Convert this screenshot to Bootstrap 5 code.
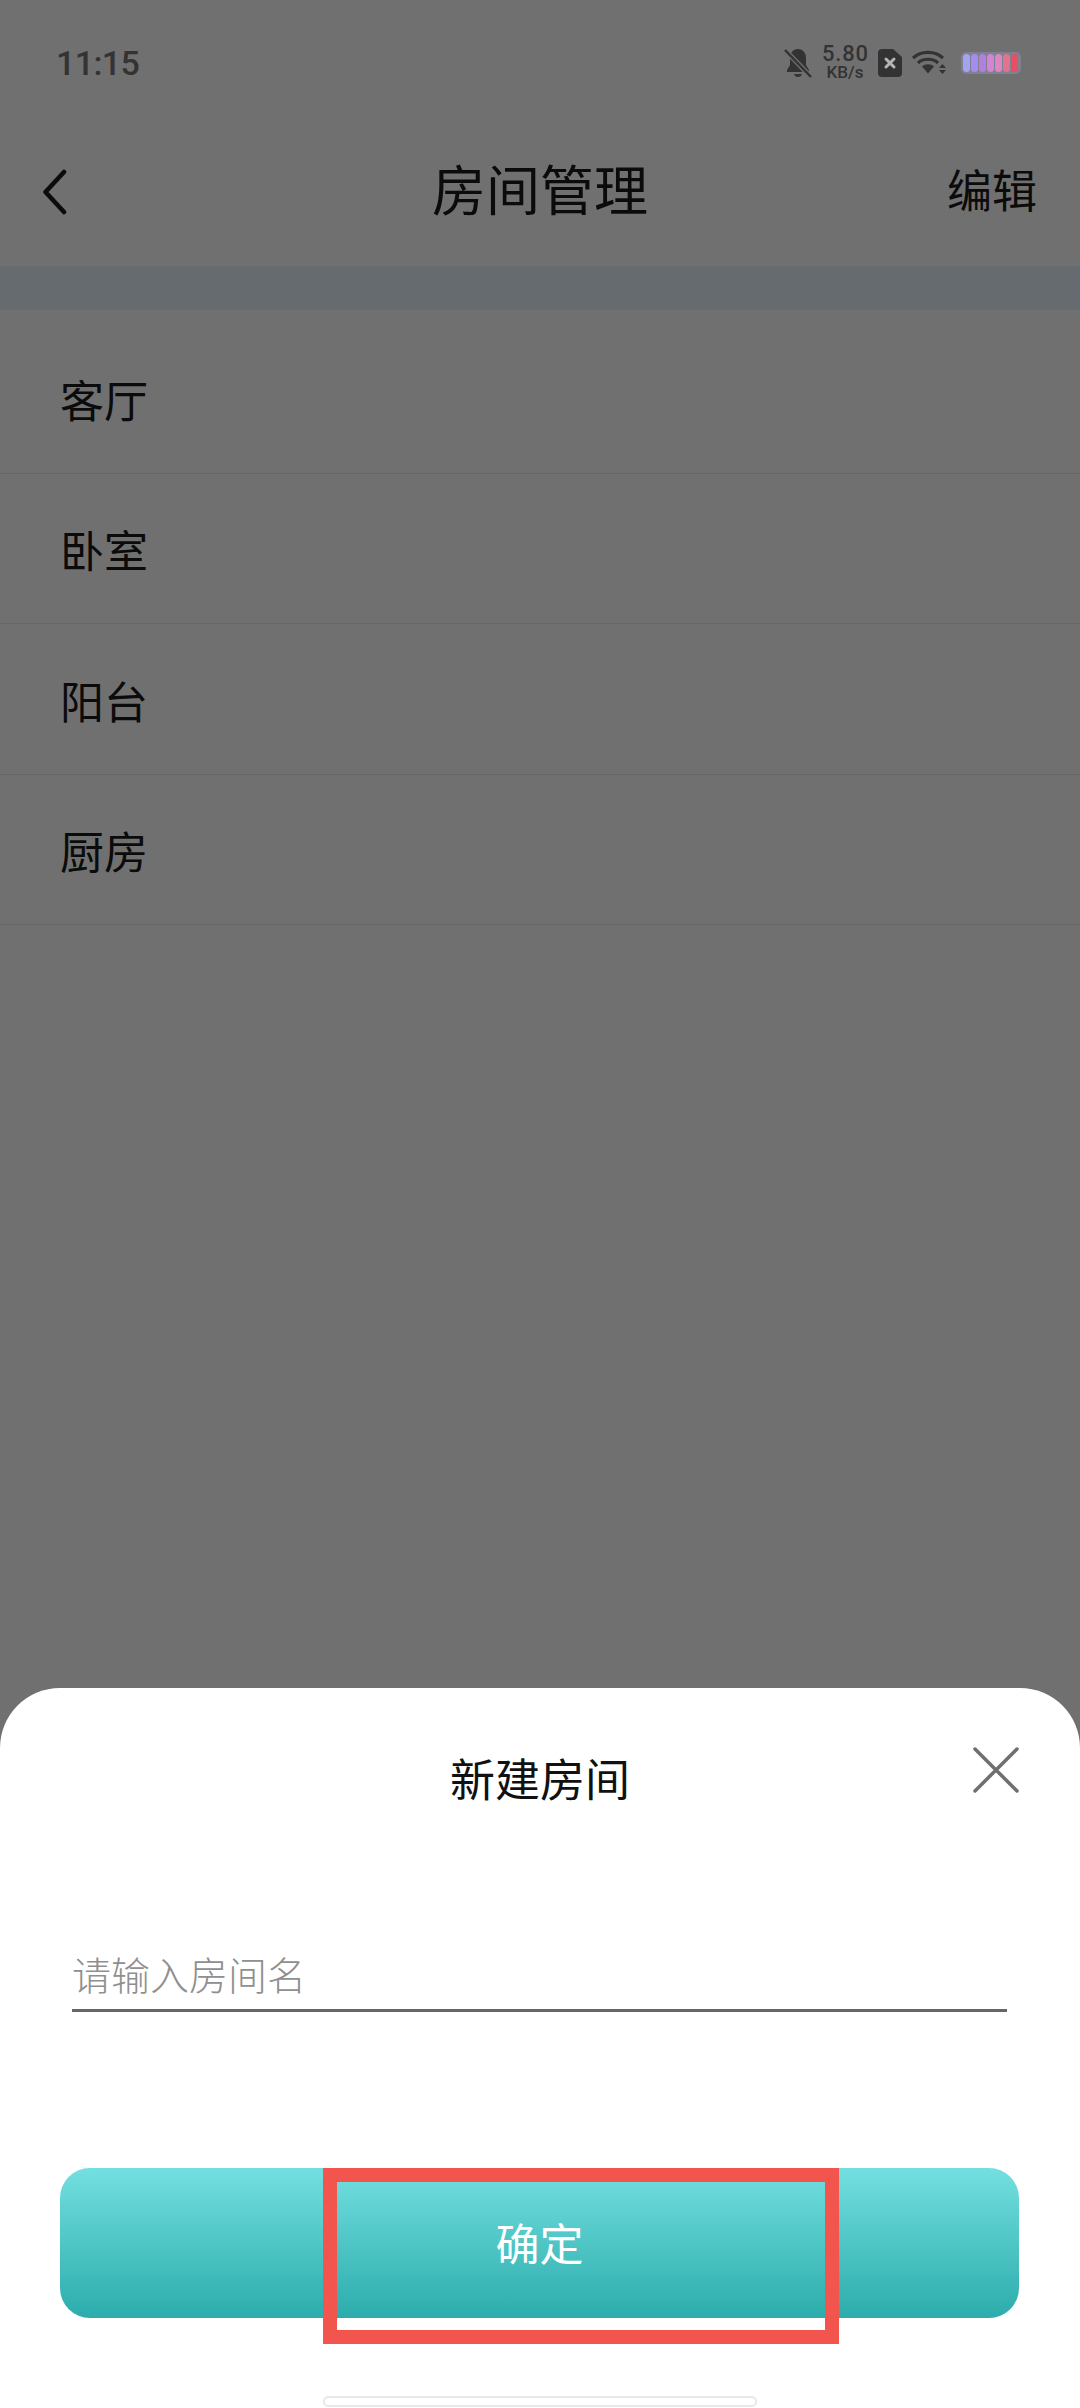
<!DOCTYPE html>
<html lang="zh-CN">
<head>
  <meta charset="UTF-8" />
  <meta name="viewport" content="width=device-width, initial-scale=1" />
  <title>房间管理</title>
  <link href="https://cdn.jsdelivr.net/npm/bootstrap@5.3.3/dist/css/bootstrap.min.css" rel="stylesheet">
  <style>
    body { margin: 0; background: #707070; font-family: "Noto Sans CJK SC", "Noto Sans", sans-serif; color: #0b0b0b; }
    .screen { width: 1080px; height: 2408px; overflow: hidden; }
    .status-row { height: 117px; padding: 0 58px 0 56px; }
    .clock { font-family: Roboto, sans-serif; font-weight: 500; font-size: 34px; letter-spacing: -.6px; line-height: 1; color: #333; margin-top: 9px; }
    .status-icons { margin-top: 8px; }
    .speed { width: 46px; margin: -2px 10px 0 10px; color: #333; font-family: Roboto, sans-serif; font-weight: 500; text-align: center; }
    .speed-top { font-size: 22px; line-height: 21px; letter-spacing: .8px; }
    .speed-unit { font-size: 17px; line-height: 17px; }
    .wifi-icon { margin-left: 9px; }
    .cell-icon { margin-left: 13px; }
    .top-nav { display: grid; grid-template-columns: 1fr auto 1fr; align-items: center; height: 149px; padding: 0 43px; }
    .top-nav-title { font-size: 54px; line-height: 1; margin-top: -8px; }
    .top-nav-edit { font-size: 45px; line-height: 1; text-align: right; margin-top: -6px; }
    .band { height: 44px; background: #666b6f; }
    .room-list { margin-top: 13px; }
    .room-row { height: 150.5px; padding: 0 60px; font-size: 44px; line-height: 1; border-bottom: 1px solid #666; }
    .room-name { display: block; margin-top: 2px; }
    .sheet { background: #fff; border-radius: 60px 60px 0 0; height: 720px; padding-top: 58px; }
    .sheet-head { display: grid; grid-template-columns: 1fr auto 1fr; padding: 0 61px; }
    .sheet-title { font-size: 45px; line-height: 64px; color: #111; }
    .close-icon { justify-self: end; margin-top: 1px; }
    .room-input.form-control { display: block; width: 935px; margin: 135px 0 0 72px; padding: 0 0 8px 0; height: auto; border: 0; border-bottom: 3px solid #666; border-radius: 0; font-size: 39px; line-height: 56px; font-weight: 300; background: transparent; box-shadow: none; }
    .room-input::placeholder { color: #8f8f8f; opacity: 1; }
    .confirm-wrap { margin-top: 156px; height: 176px; }
    .confirm-btn.btn { display: block; width: 959px; height: 150px; margin-left: 60px; border: 0; border-radius: 30px; background: linear-gradient(#73dfe0, #2cacac); color: #fff; font-size: 44px; line-height: 1; padding: 0 0 3px; }
    .mark-box { left: 323px; top: 0; width: 516px; height: 176px; border: solid #f2554d; border-width: 14px; pointer-events: none; }
    .home-bar { width: 434px; height: 11px; margin: 52px 0 0 323px; border: 2px solid #e8e8e8; border-radius: 5px; }
  </style>
</head>
<body>
  <div class="screen d-flex flex-column">
    <div class="status-row d-flex align-items-center justify-content-between">
      <span class="clock">11:15</span>
      <div class="status-icons d-flex align-items-center">
        <svg width="28" height="30" viewBox="0 0 28 30"><path fill="#333" d="M14 1c5 0 8 4 8 9v7l3 5v2H3v-2l3-5v-7c0-5 3-9 8-9zM10 26h8c-.5 2-2 3-4 3s-3.500-1-4-3z"/><path stroke="#707070" stroke-width="5" d="M1 2l26 27"/><path stroke="#333" stroke-width="2.500" d="M1 2l26 27"/></svg>
        <div class="speed">
          <div class="speed-top">5.80</div>
          <div class="speed-unit">KB/s</div>
        </div>
        <svg width="24" height="28" viewBox="0 0 24 28"><path fill="#333" d="M4 0h11l9 8v16a4 4 0 0 1-4 4H4a4 4 0 0 1-4-4V4a4 4 0 0 1 4-4z"/><path stroke="#b5b5b5" stroke-width="3" stroke-linecap="round" d="M8 10l8 8M16 10l-8 8"/></svg>
        <svg class="wifi-icon" width="36" height="26" viewBox="0 0 36 26"><g fill="none" stroke="#333" stroke-width="3.200"><path d="M2 8c8-7.500 22-7.500 30 0"/><path d="M7 13c5-5 15-5 20 0"/></g><path fill="#333" d="M11 16.500c3-3 9-3 12 0l-6 7zM28 18l3.500-4 3.500 4zM28 20h7l-3.500 4z"/></svg>
        <svg class="cell-icon" width="62" height="24" viewBox="0 0 62 24">
          <rect x="1" y="1" width="60" height="22" rx="5" fill="#7d8190"/>
          <rect x="3" y="3" width="7" height="18" rx="3.500" fill="#a3a3f2"/>
          <rect x="11" y="3" width="7" height="18" rx="3.500" fill="#a78cf0"/>
          <rect x="19" y="3" width="7" height="18" rx="3.500" fill="#b17fdc"/>
          <rect x="27" y="3" width="7" height="18" rx="3.500" fill="#d285d3"/>
          <rect x="35" y="3" width="7" height="18" rx="3.500" fill="#de86c0"/>
          <rect x="43" y="3" width="7" height="18" rx="3.500" fill="#e0748f"/>
          <rect x="51" y="3" width="7" height="18" rx="3.500" fill="#e84f62"/>
        </svg>
      </div>
    </div>

    <nav class="top-nav">
      <svg width="24" height="46" viewBox="0 0 24 46"><path fill="none" stroke="#0b0b0b" stroke-width="4.500" stroke-linecap="round" stroke-linejoin="round" d="M21 3L2.500 23 21 43"/></svg>
      <span class="top-nav-title">房间管理</span>
      <span class="top-nav-edit">编辑</span>
    </nav>
    <div class="band"></div>

    <div class="room-list list-group list-group-flush">
      <div class="room-row d-flex align-items-center"><span class="room-name">客厅</span></div>
      <div class="room-row d-flex align-items-center"><span class="room-name">卧室</span></div>
      <div class="room-row d-flex align-items-center"><span class="room-name">阳台</span></div>
      <div class="room-row d-flex align-items-center"><span class="room-name">厨房</span></div>
    </div>

    <div class="sheet mt-auto">
      <div class="sheet-head">
        <span></span>
        <span class="sheet-title">新建房间</span>
        <svg class="close-icon" width="46" height="46" viewBox="0 0 46 46"><path stroke="#6f6f6f" stroke-width="3.500" stroke-linecap="round" d="M2 2l42 42M44 2L2 44"/></svg>
      </div>
      <input class="room-input form-control" type="text" placeholder="请输入房间名" />
      <div class="confirm-wrap position-relative">
        <button class="confirm-btn btn" type="button">确定</button>
        <div class="mark-box position-absolute"></div>
      </div>
      <div class="home-bar"></div>
    </div>
  </div>
  <script src="https://cdn.jsdelivr.net/npm/bootstrap@5.3.3/dist/js/bootstrap.bundle.min.js"></script>
</body>
</html>
